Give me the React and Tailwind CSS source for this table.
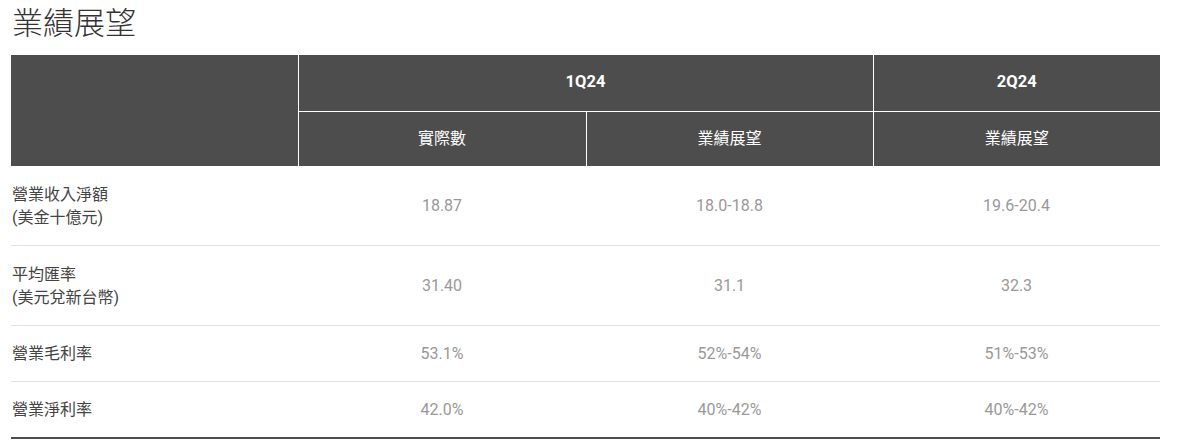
export default function App() {
  const rows = [
    { label: ["營業收入淨額", "(美金十億元)"], v: ["18.87", "18.0-18.8", "19.6-20.4"] },
    { label: ["平均匯率", "(美元兌新台幣)"], v: ["31.40", "31.1", "32.3"] },
    { label: ["營業毛利率"], v: ["53.1%", "52%-54%", "51%-53%"] },
    { label: ["營業淨利率"], v: ["42.0%", "40%-42%", "40%-42%"] },
  ];
  const font = { fontFamily: 'Roboto, "Noto Sans CJK TC", sans-serif' };
  return (
    <div className="bg-white w-[1188px] h-[448px] pl-[11px]" style={font}>
      <h1 className="text-[31px] leading-[48px] text-[#333333] font-light pl-[1px]">業績展望</h1>
      <div className="h-[7px]" />
      <table className="table-fixed w-[1149px] border-collapse border-b-2 border-b-[#4d4d4d]">
        <colgroup>
          <col className="w-[287px]" />
          <col className="w-[288px]" />
          <col className="w-[287px]" />
          <col className="w-[287px]" />
        </colgroup>
        <thead className="bg-[#4d4d4d] text-white text-[16px]">
          <tr className="h-[56px]">
            <th rowSpan={2} className="border-r border-r-white"></th>
            <th colSpan={2} className="font-bold text-[16.5px] border-b border-b-white border-r border-r-white">1Q24</th>
            <th className="font-bold text-[16.5px] border-b border-b-white">2Q24</th>
          </tr>
          <tr className="h-[55px]">
            <th className="font-normal border-r border-r-white">實際數</th>
            <th className="font-normal border-r border-r-white">業績展望</th>
            <th className="font-normal">業績展望</th>
          </tr>
        </thead>
        <tbody className="leading-[23px]">
          {rows.map((r, i) => (
            <tr key={i} className={i < rows.length - 1 ? "border-b border-b-[#e2e2e2]" : ""}>
              <td className={`text-[16px] text-[#444444] pl-[1px] ${r.label.length > 1 ? "py-[16.5px]" : "py-[16px]"}`}>
                {r.label.map((l, j) => (
                  <div key={j}>{l}</div>
                ))}
              </td>
              {r.v.map((v, j) => (
                <td key={j} className="text-center text-[16px] text-[#999999]">{v}</td>
              ))}
            </tr>
          ))}
        </tbody>
      </table>
    </div>
  );
}
